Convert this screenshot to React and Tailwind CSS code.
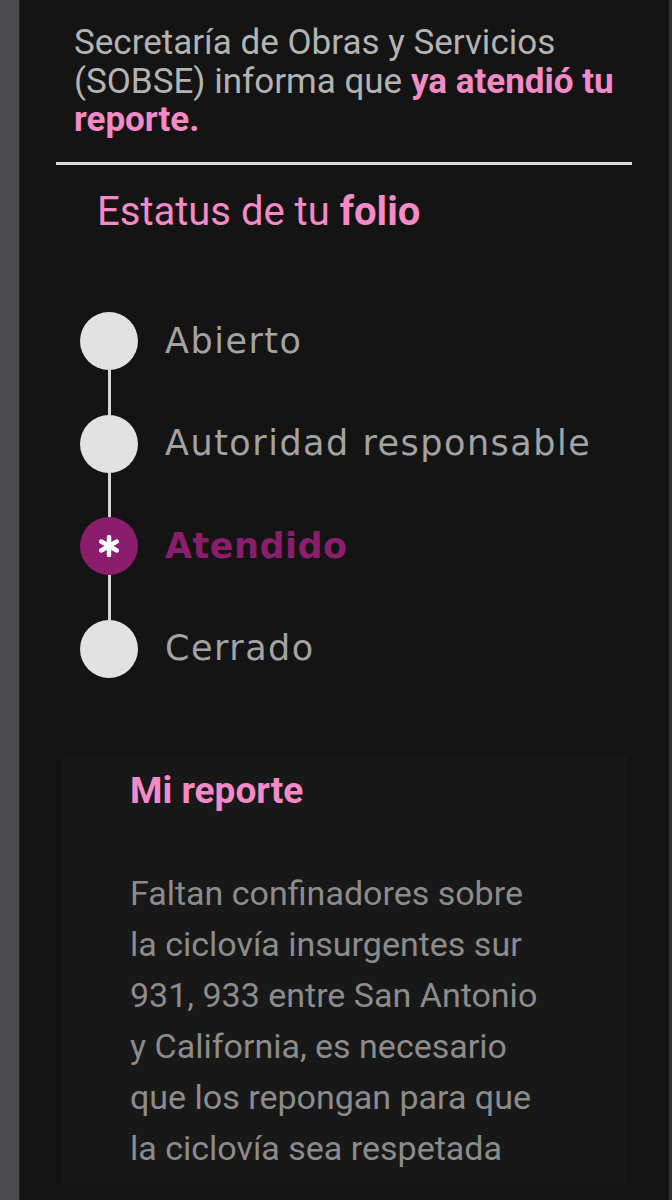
import React from 'react'

const steps = [
  { label: 'Abierto', active: false },
  { label: 'Autoridad responsable', active: false },
  { label: 'Atendido', active: true },
  { label: 'Cerrado', active: false },
]

function Asterisk() {
  return (
    <svg viewBox="0 0 24 24" className="w-[24px] h-[24px]" fill="none" stroke="white" strokeWidth="4.5" strokeLinecap="round">
      <line x1="12" y1="3" x2="12" y2="21" />
      <line x1="4.2" y1="7.5" x2="19.8" y2="16.5" />
      <line x1="4.2" y1="16.5" x2="19.8" y2="7.5" />
    </svg>
  )
}

export default function App() {
  return (
    <div className="flex min-h-[1200px] bg-[#141414] font-['Roboto',sans-serif]">
      {/* side strip */}
      <div className="w-[20px] shrink-0 bg-[#4a4a4f] border-r border-[#262626]" />

      <div className="flex-1 pt-[24px]">
        {/* status message */}
        <p className="ml-[54px] w-[545px] text-[35px] leading-[38.5px] text-[#b3b3b3]">
          Secretaría de Obras y Servicios (SOBSE) informa que{' '}
          <strong className="font-bold text-[#f48bc7]">ya atendió tu reporte.</strong>
        </p>

        <div className="ml-[36px] mt-[22.5px] w-[576px] h-[3px] bg-[#d9d9d9]" />

        <h2 className="ml-[77px] mt-[23px] text-[40px] leading-[48px] text-[#f48bc7]">
          Estatus de tu <span className="font-bold">folio</span>
        </h2>

        {/* timeline */}
        <div className="ml-[60px] mt-[76px]">
          {steps.map((s, i) => (
            <div key={s.label}>
              {i > 0 && <div className="ml-[28px] w-[3px] h-[44.5px] bg-[#d6d6d6]" />}
              <div className="flex items-center gap-[27px] h-[58px]">
                {s.active ? (
                  <div className="w-[58px] h-[58px] shrink-0 rounded-full bg-[#8a1d6c] flex items-center justify-center">
                    <Asterisk />
                  </div>
                ) : (
                  <div className="w-[58px] h-[58px] shrink-0 rounded-full bg-[#e2e2e2]" />
                )}
                <span
                  className={
                    s.active
                      ? "font-['DejaVu_Sans',sans-serif] text-[35px] tracking-[0.5px] font-bold text-[#8a1d6c]"
                      : "font-['DejaVu_Sans',sans-serif] text-[35px] tracking-[1.5px] text-[#a3a3a3]"
                  }
                >
                  {s.label}
                </span>
              </div>
            </div>
          ))}
        </div>

        {/* report card */}
        <div className="ml-[43px] mt-[78px] w-[564px] bg-[#181818] pl-[67px] pt-[13px] pb-[10px]">
          <h3 className="text-[37px] leading-[44px] font-bold text-[#f48bc7]">Mi reporte</h3>
          <p className="mt-[55.5px] w-[420px] text-[34px] leading-[51px] text-[#8c8c8c]">
            Faltan confinadores sobre la ciclovía insurgentes sur 931, 933 entre San Antonio y California, es necesario que los repongan para que la ciclovía sea respetada
          </p>
        </div>
      </div>

      <div className="w-[3px] shrink-0 bg-[#2e2e2e]" />
    </div>
  )
}
